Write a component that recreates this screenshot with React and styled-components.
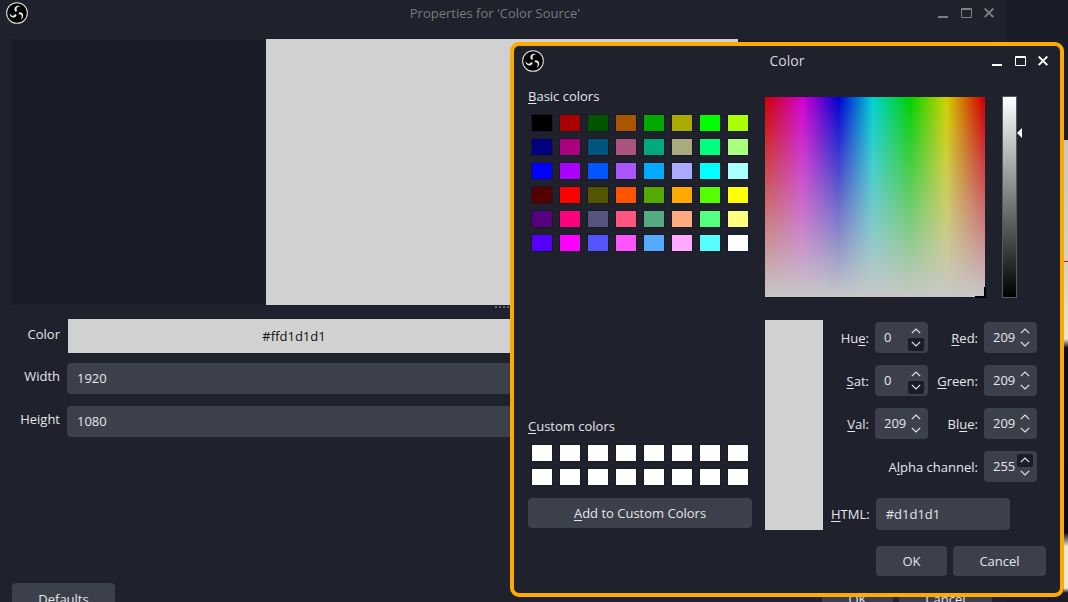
import React from 'react'
import styled, { createGlobalStyle } from 'styled-components'

const basicColors = [
  '#000000', '#aa0000', '#005500', '#aa5500', '#00aa00', '#aaaa00', '#00ff00', '#aaff00',
  '#00007f', '#aa007f', '#00557f', '#aa557f', '#00aa7f', '#aaaa7f', '#00ff7f', '#aaff7f',
  '#0000ff', '#aa00ff', '#0055ff', '#aa55ff', '#00aaff', '#aaaaff', '#00ffff', '#aaffff',
  '#550000', '#ff0000', '#555500', '#ff5500', '#55aa00', '#ffaa00', '#55ff00', '#ffff00',
  '#55007f', '#ff007f', '#55557f', '#ff557f', '#55aa7f', '#ffaa7f', '#55ff7f', '#ffff7f',
  '#5500ff', '#ff00ff', '#5555ff', '#ff55ff', '#55aaff', '#ffaaff', '#55ffff', '#ffffff',
]

const BLADE = 'M10.6 10.8 C8.6 9.2 8.6 5.6 11.6 4.4 C13.2 3.8 14.9 4.2 16 5 C14.4 4.8 12.6 5.2 11.8 6.5 C11 7.9 11.6 9.3 12.6 10 Z'

function ObsLogo({ size = 22 }) {
  return (
    <svg width={size} height={size} viewBox="0 0 24 24">
      <circle cx="12" cy="12" r="11.3" fill="#000" stroke="#e4e4e4" strokeWidth="1.1" />
      <path d={BLADE} fill="#e8e8e8" />
      <path d={BLADE} fill="#e8e8e8" transform="rotate(120 12 12)" />
      <path d={BLADE} fill="#e8e8e8" transform="rotate(240 12 12)" />
      <circle cx="12" cy="12" r="2" fill="#000" />
    </svg>
  )
}

function WindowButtons({ dim }) {
  return (
    <Controls $dim={dim}>
      <svg width="11" height="10" viewBox="0 0 11 10">
        <rect x="0" y="8" width="10" height="2" fill="currentColor" />
      </svg>
      <svg width="11" height="10" viewBox="0 0 11 10">
        <path d="M.5 .5h10v9H.5z M.5 1.5h10" fill="none" stroke="currentColor" />
      </svg>
      <svg width="10" height="10" viewBox="0 0 10 10">
        <path d="M.7 .5l8.6 8.6M9.3 .5L.7 9.1" fill="none" stroke="currentColor" strokeWidth="1.9" />
      </svg>
    </Controls>
  )
}

function Key({ children }) {
  return <u>{children}</u>
}

function Spin({ value, hover }) {
  return (
    <SpinBox>
      <SpinValue>{value}</SpinValue>
      <SpinArrows>
        <SpinArrow $active={hover === 'up'}>
          <svg width="10" height="6" viewBox="0 0 10 6">
            <path d="M.8 5.2L5 1l4.2 4.2" fill="none" stroke="#e4e6ec" strokeWidth="1.2" />
          </svg>
        </SpinArrow>
        <SpinArrow $active={hover === 'down'}>
          <svg width="10" height="6" viewBox="0 0 10 6">
            <path d="M.8 .8L5 5l4.2-4.2" fill="none" stroke="#e4e6ec" strokeWidth="1.2" />
          </svg>
        </SpinArrow>
      </SpinArrows>
    </SpinBox>
  )
}

export default function App() {
  return (
    <>
      <GlobalStyle />
      <Desktop>
        <BackWindow>
          <BackTitle>
            <ObsLogo />
            <BackTitleText>Properties for 'Color Source'</BackTitleText>
            <WindowButtons dim />
          </BackTitle>
          <Preview>
            <PreviewFill />
          </Preview>
          <Handle />
          <Form>
            <ColorRow>
              <FormLabel>Color</FormLabel>
              <ColorValue>#ffd1d1d1</ColorValue>
            </ColorRow>
            <FormRow>
              <FormLabel>Width</FormLabel>
              <TextValue>1920</TextValue>
            </FormRow>
            <FormRow>
              <FormLabel>Height</FormLabel>
              <TextValue>1080</TextValue>
            </FormRow>
          </Form>
          <BackFooter>
            <DefaultsButton>Defaults</DefaultsButton>
            <BackActions>
              <BackButton>OK</BackButton>
              <BackButton>Cancel</BackButton>
            </BackActions>
          </BackFooter>
        </BackWindow>

        <Wallpaper>
          <RedLine />
        </Wallpaper>

        <Dialog>
          <DialogTitle>
            <ObsLogo />
            <DialogTitleText>Color</DialogTitleText>
            <WindowButtons />
          </DialogTitle>
          <DialogBody>
            <LeftColumn>
              <SectionLabel><Key>B</Key>asic colors</SectionLabel>
              <SwatchGrid>
                {basicColors.map((c, i) => (
                  <SwatchCell key={i} $selected={i === basicColors.length - 1}>
                    <Swatch $color={c} />
                  </SwatchCell>
                ))}
              </SwatchGrid>
              <Grow />
              <SectionLabel><Key>C</Key>ustom colors</SectionLabel>
              <SwatchGrid>
                {Array.from({ length: 16 }).map((_, i) => (
                  <SwatchCell key={i}>
                    <Swatch $color="#ffffff" />
                  </SwatchCell>
                ))}
              </SwatchGrid>
              <AddButton><Key>A</Key>dd to Custom Colors</AddButton>
            </LeftColumn>

            <RightColumn>
              <PickerRow>
                <HueField>
                  <Crosshair />
                </HueField>
                <LumStrip>
                  <LumArrow />
                </LumStrip>
              </PickerRow>
              <EditorRow>
                <CurrentColor />
                <Fields>
                  <SpinGrid>
                    <FieldLabel>Hu<Key>e</Key>:</FieldLabel>
                    <Spin value="0" hover="down" />
                    <FieldLabel><Key>R</Key>ed:</FieldLabel>
                    <Spin value="209" />
                    <FieldLabel><Key>S</Key>at:</FieldLabel>
                    <Spin value="0" hover="down" />
                    <FieldLabel><Key>G</Key>reen:</FieldLabel>
                    <Spin value="209" />
                    <FieldLabel><Key>V</Key>al:</FieldLabel>
                    <Spin value="209" />
                    <FieldLabel>Bl<Key>u</Key>e:</FieldLabel>
                    <Spin value="209" />
                    <AlphaLabel>A<Key>l</Key>pha channel:</AlphaLabel>
                    <Spin value="255" hover="up" />
                  </SpinGrid>
                  <HtmlRow>
                    <FieldLabel><Key>H</Key>TML:</FieldLabel>
                    <HtmlInput>#d1d1d1</HtmlInput>
                  </HtmlRow>
                </Fields>
              </EditorRow>
              <DialogActions>
                <OkButton>OK</OkButton>
                <CancelButton>Cancel</CancelButton>
              </DialogActions>
            </RightColumn>
          </DialogBody>
        </Dialog>
      </Desktop>
    </>
  )
}

const GlobalStyle = createGlobalStyle`
  html, body { margin: 0; padding: 0; background: #1a1c28; }
  * { box-sizing: border-box; }
  u { text-underline-offset: 2px; text-decoration-thickness: 1px; }
`

const Desktop = styled.div`
  position: relative;
  width: 1068px;
  height: 602px;
  overflow: hidden;
  background: #1a1c28;
  font-family: "Open Sans", "Noto Sans", sans-serif;
  font-size: 13px;
  color: #e4e6ec;
`

const BackWindow = styled.div`
  position: absolute;
  left: 0;
  top: 0;
  width: 1006px;
  height: 640px;
  background: #1f222c;
  display: flex;
  flex-direction: column;
`

const BackTitle = styled.div`
  height: 26px;
  padding: 0 12px 0 6px;
  margin-bottom: 13px;
  display: flex;
  align-items: center;
  justify-content: space-between;
`

const BackTitleText = styled.div`
  color: #787a80;
  font-size: 13px;
  margin-left: 24px;
`

const Controls = styled.div`
  display: flex;
  align-items: center;
  gap: 12px;
  color: ${p => (p.$dim ? '#7d7f84' : '#ffffff')};
`

const Preview = styled.div`
  height: 266px;
  margin: 0 12px;
  background: #1a1c28;
  padding-left: 254px;
`

const PreviewFill = styled.div`
  width: 472px;
  height: 100%;
  background: #d1d1d1;
`

const Handle = styled.div`
  height: 13px;
  margin-left: 495px;
  width: 14px;
  border-top: 2px dotted #6a6c74;
  margin-top: 1px;
`

const Form = styled.div`
  display: flex;
  flex-direction: column;
  gap: 12px;
  padding-right: 486px;
`

const FormRow = styled.div`
  display: flex;
  align-items: center;
  gap: 7px;
`

const ColorRow = styled(FormRow)`
  margin-bottom: -2px;
`

const FormLabel = styled.div`
  width: 60px;
  text-align: right;
  margin-top: -5px;
`

const ColorValue = styled.div`
  flex: 1;
  height: 34px;
  margin-left: 1px;
  background: #d1d1d1;
  color: #111;
  text-align: center;
  line-height: 34px;
`

const TextValue = styled.div`
  flex: 1;
  height: 31px;
  background: #3c404b;
  border-radius: 4px;
  padding-left: 10px;
  line-height: 31px;
`

const BackFooter = styled.div`
  margin-top: 146px;
  padding: 0 12px;
  display: flex;
  justify-content: space-between;
`

const DefaultsButton = styled.div`
  width: 103px;
  height: 31px;
  background: #3c404b;
  border-radius: 4px;
  text-align: center;
  line-height: 31px;
  padding-top: 1px;
`

const BackActions = styled.div`
  display: flex;
  gap: 6px;
  padding-right: 2px;
`

const BackButton = styled(DefaultsButton)`
  width: 71px;
  &:last-child { width: 93px; }
`

const Wallpaper = styled.div`
  position: absolute;
  left: 1064px;
  top: 140px;
  width: 4px;
  height: 462px;
  background: linear-gradient(180deg, #c9c6bc 0%, #d8d4c0 30%, #f2e8c8 43%, #0c0d1a 45%, #090a18 85%, #f0e8d0 88%, #f0e8d0 97%, #1a1c28 98%);
`

const RedLine = styled.div`
  position: absolute;
  top: 121px;
  left: 0;
  width: 4px;
  height: 1px;
  background: #ff0000;
`

const Dialog = styled.div`
  position: absolute;
  left: 510px;
  top: 42px;
  width: 554px;
  height: 555px;
  background: #1f222c;
  border: 4px solid #ffaa00;
  border-radius: 9px;
  display: flex;
  flex-direction: column;
`

const DialogTitle = styled.div`
  height: 30px;
  padding: 0 12px 0 8px;
  display: flex;
  align-items: center;
  justify-content: space-between;
`

const DialogTitleText = styled.div`
  color: #d6d7da;
  font-size: 14px;
  margin: -2px 0 0 38px;
`

const DialogBody = styled.div`
  flex: 1;
  display: flex;
  padding: 11px 13px 13px 14px;
  gap: 13px;
`

const LeftColumn = styled.div`
  width: 224px;
  display: flex;
  flex-direction: column;
`

const SectionLabel = styled.div`
  height: 18px;
  line-height: 18px;
  margin-bottom: 6px;
`

const SwatchGrid = styled.div`
  display: grid;
  grid-template-columns: repeat(8, 28px);
  grid-auto-rows: 24px;
`

const SwatchCell = styled.div`
  display: flex;
  align-items: center;
  justify-content: center;
  background: ${p => (p.$selected ? '#1a2036' : 'transparent')};
  border-radius: 2px;
`

const Swatch = styled.div`
  width: 22px;
  height: 18px;
  background: ${p => p.$color};
  border: 1px solid #181a24;
`

const Grow = styled.div`
  flex: 1;
`

const Button = styled.div`
  background: #3c404b;
  border-radius: 4px;
  height: 30px;
  line-height: 30px;
  text-align: center;
`

const AddButton = styled(Button)`
  margin-top: 9px;
  margin-bottom: 52px;
`

const RightColumn = styled.div`
  flex: 1;
  display: flex;
  flex-direction: column;
`

const PickerRow = styled.div`
  height: 201px;
  display: flex;
  gap: 17px;
  margin-top: 10px;
`

const HueField = styled.div`
  position: relative;
  width: 220px;
  height: 200px;
  background:
    linear-gradient(180deg, rgba(200,200,200,0) 0%, rgba(200,200,200,1) 100%),
    linear-gradient(90deg, #d10000 0%, #d100d1 17%, #0000d1 33.5%, #00d1d1 49%, #00d100 66%, #d1d100 82.5%, #d10000 99%);
`

const Crosshair = styled.div`
  position: absolute;
  right: -1px;
  bottom: -1px;
  width: 11px;
  height: 11px;
  border-right: 2px solid #000;
  border-bottom: 2px solid #000;
`

const LumStrip = styled.div`
  position: relative;
  width: 15px;
  height: 202px;
  margin-top: -1px;
  border: 1px solid #555861;
  background: linear-gradient(180deg, #fff, #000);
`

const LumArrow = styled.div`
  position: absolute;
  left: 14px;
  top: 31px;
  width: 0;
  height: 0;
  border-top: 5px solid transparent;
  border-bottom: 5px solid transparent;
  border-right: 5px solid #fff;
`

const EditorRow = styled.div`
  display: flex;
  margin-top: 22px;
`

const CurrentColor = styled.div`
  width: 58px;
  height: 210px;
  background: #d1d1d1;
`

const Fields = styled.div`
  flex: 1;
  padding-left: 7px;
  padding-top: 2px;
  display: flex;
  flex-direction: column;
`

const SpinGrid = styled.div`
  display: grid;
  grid-template-columns: 41px 53px 48px 53px;
  grid-auto-rows: 31px;
  row-gap: 12px;
  column-gap: 4px;
  align-items: center;
`

const FieldLabel = styled.div`
  text-align: right;
  padding-right: 2px;
  white-space: nowrap;
`

const AlphaLabel = styled(FieldLabel)`
  grid-column: 1 / 4;
`

const SpinBox = styled.div`
  height: 31px;
  width: 53px;
  background: #3c404b;
  border-radius: 4px;
  padding: 0 0 0 9px;
  display: flex;
  align-items: center;
  justify-content: space-between;
  line-height: 26px;
`

const SpinValue = styled.span`
  margin-top: -2px;
`

const SpinArrows = styled.div`
  display: flex;
  flex-direction: column;
  padding: 0 4px 0 0;
`

const SpinArrow = styled.div`
  width: 16px;
  height: 13px;
  display: flex;
  align-items: center;
  justify-content: center;
  background: ${p => (p.$active ? '#1a1c28' : 'transparent')};
  border-radius: 2px;
`

const HtmlRow = styled.div`
  margin-top: 16px;
  padding-left: 1px;
  display: flex;
  align-items: center;
  gap: 4px;
`

const HtmlInput = styled.div`
  width: 134px;
  height: 32px;
  background: #3c404b;
  border-radius: 4px;
  padding-left: 10px;
  line-height: 32px;
`

const DialogActions = styled.div`
  margin-top: 16px;
  display: flex;
  justify-content: flex-end;
  gap: 6px;
  padding-right: 1px;
`

const OkButton = styled(Button)`
  width: 71px;
`

const CancelButton = styled(Button)`
  width: 93px;
`
